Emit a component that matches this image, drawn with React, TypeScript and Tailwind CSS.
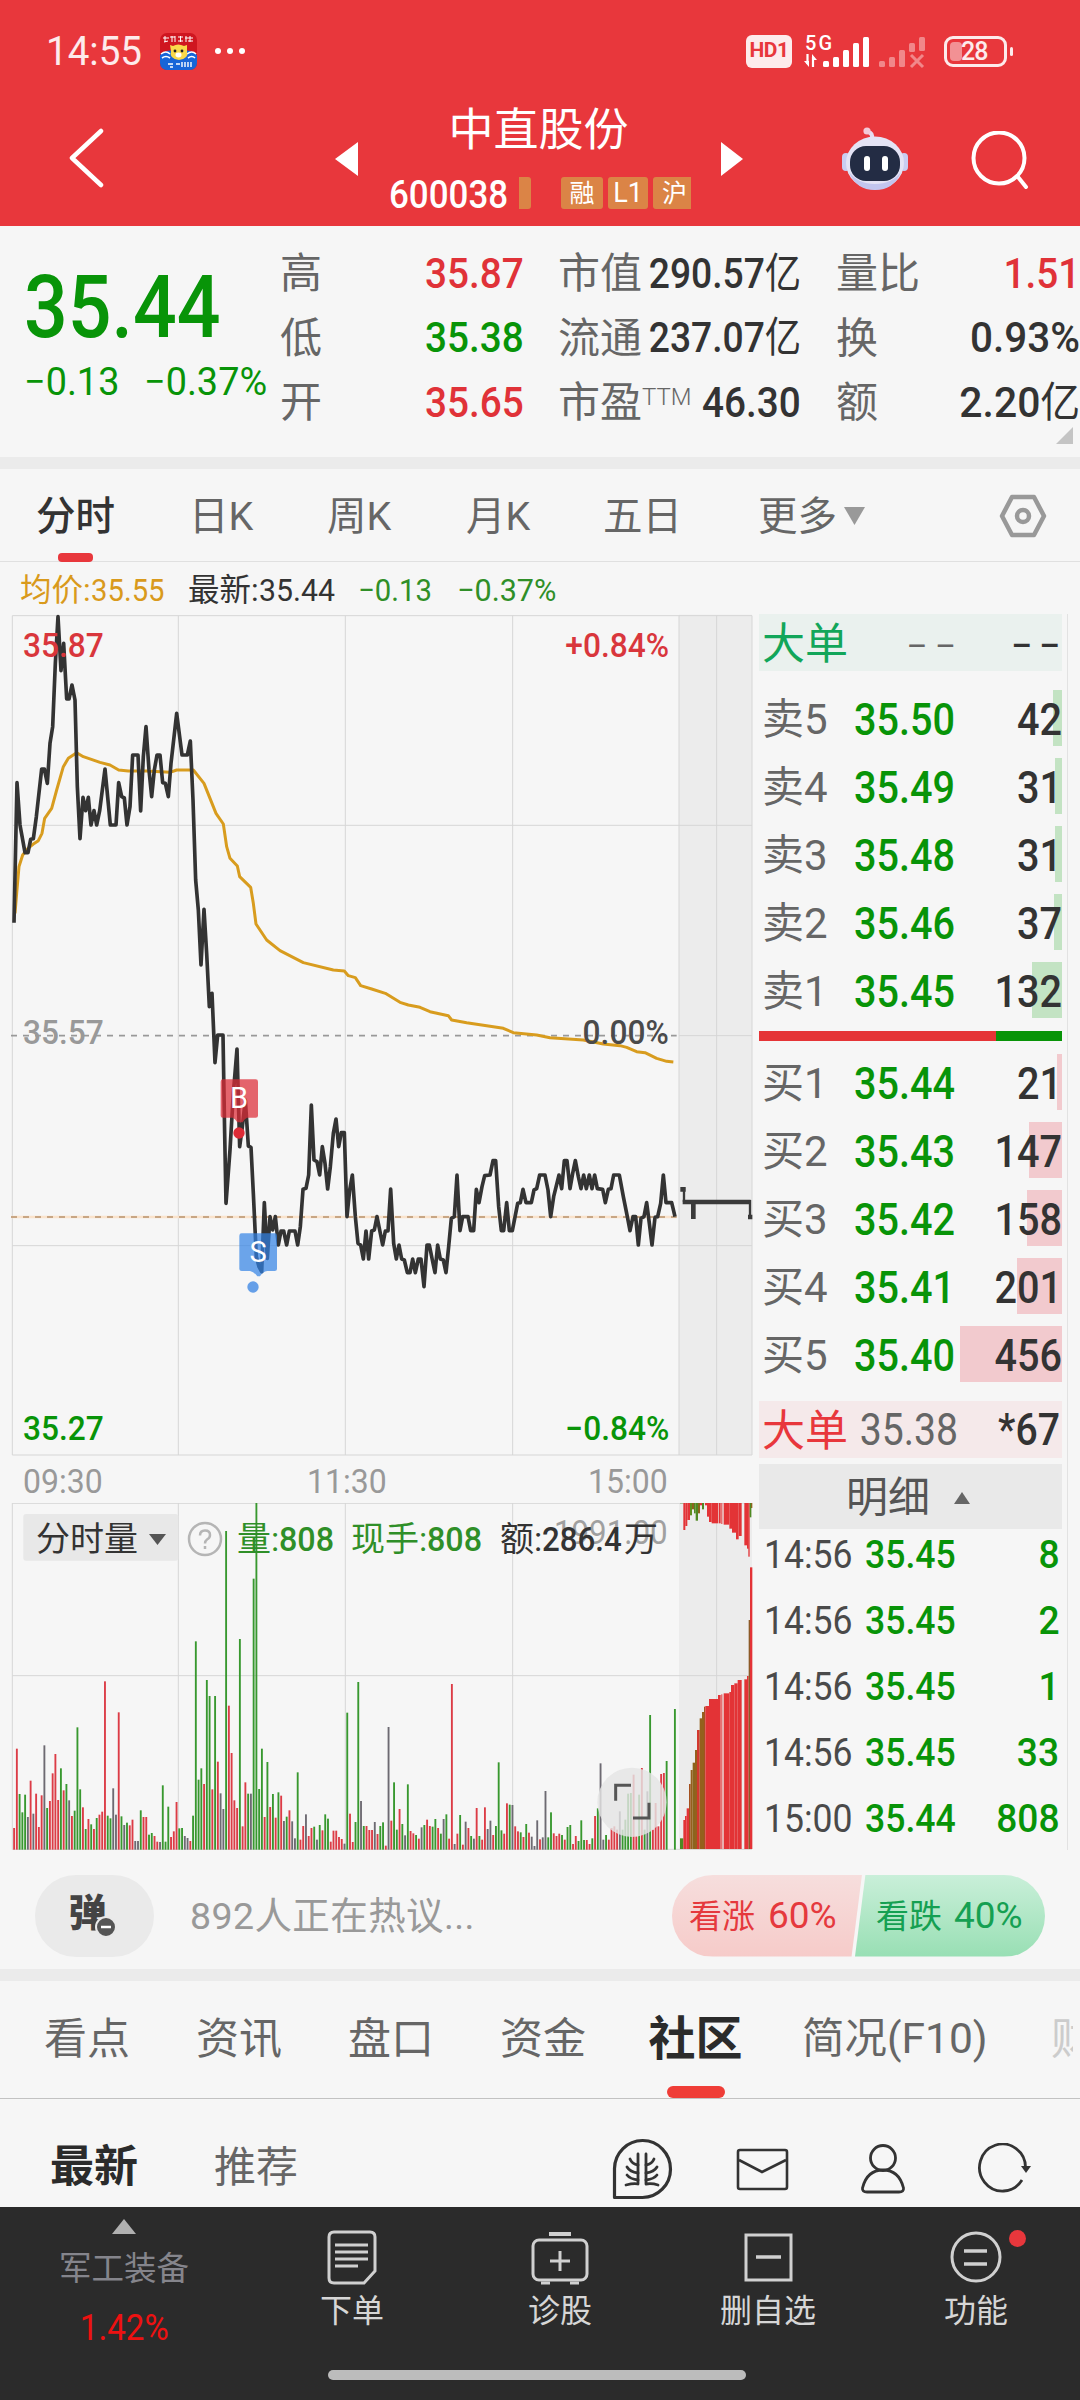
import type { ReactNode } from 'react';
import clsx from 'clsx';

// ---------- dados do gráfico (unidades de 1/3 px) ----------

const PRICE_LINE =
  '42,968 51,548 60,675 75,758 84,758 92,718 100,716 109,650 125,507 133,507 142,550 150,430 158,380 166,190 174,50 183,212 191,130 200,297 207,297 216,255 225,300 232,560 240,716 249,592 257,632 265,592 273,675 282,632 290,675 299,632 315,507 331,675 348,675 356,548 365,590 373,594 381,675 390,620 398,465 414,465 422,633 430,470 438,380 447,510 455,590 463,510 471,465 480,465 488,548 496,550 505,590 513,490 521,420 530,340 546,465 562,465 571,423 579,600 587,840 595,930 603,1095 612,928 620,1060 628,1220 636,1180 645,1388 653,1305 669,1305 674,1600 678,1810 690,1650 700,1480 711,1347 719,1640 727,1580 736,1500 745,1638 753,1642 760,1780 769,1970 777,2000 785,2015 793,1808 802,1975 810,1850 818,1890 826,1850 835,1935 843,1893 851,1893 860,1935 868,1893 885,1893 893,1935 901,1880 909,1768 918,1765 926,1725 934,1515 942,1680 951,1685 959,1725 967,1640 975,1690 983,1767 991,1700 1000,1600 1008,1557 1016,1640 1024,1598 1033,1598 1041,1850 1049,1770 1057,1725 1066,1850 1074,1930 1082,1935 1090,1977 1098,1893 1106,1977 1115,1893 1123,1890 1131,1850 1148,1935 1156,1893 1164,1893 1172,1767 1181,1930 1189,1977 1197,1935 1205,1977 1213,1980 1222,2018 1230,2018 1238,1977 1246,2018 1255,1977 1263,1977 1272,2060 1281,1935 1288,1935 1297,1980 1305,2018 1313,1935 1321,1977 1330,1980 1338,2018 1346,1940 1354,1855 1363,1850 1371,1725 1380,1892 1388,1850 1404,1850 1412,1892 1421,1892 1429,1768 1437,1808 1446,1760 1454,1727 1470,1725 1479,1682 1487,1682 1496,1820 1504,1892 1511,1892 1520,1808 1528,1892 1537,1892 1553,1810 1561,1808 1569,1768 1578,1808 1594,1808 1602,1770 1610,1766 1619,1725 1635,1725 1644,1770 1652,1850 1661,1790 1677,1725 1685,1766 1693,1682 1701,1682 1710,1766 1718,1720 1726,1682 1735,1730 1743,1766 1751,1725 1759,1766 1768,1725 1776,1766 1784,1725 1792,1766 1808,1768 1816,1808 1825,1768 1833,1766 1841,1725 1858,1725 1870,1790 1882,1850 1890,1892 1899,1850 1907,1850 1915,1935 1923,1855 1932,1850 1940,1808 1948,1870 1956,1935 1965,1852 1973,1850 1982,1810 1990,1725 1998,1808 2015,1808 2025,1850';

const AVG_LINE =
  '45,940 50,880 57,800 68,765 84,745 100,732 115,722 126,700 134,655 155,625 170,570 190,500 205,475 230,458 250,470 300,487 330,495 356,510 385,513 440,513 510,517 530,510 580,510 612,550 648,640 670,672 680,740 690,775 712,798 719,830 752,862 760,910 768,972 800,1020 840,1052 910,1088 1000,1110 1033,1113 1045,1127 1066,1133 1082,1157 1115,1167 1156,1180 1200,1207 1225,1215 1260,1222 1290,1235 1345,1247 1355,1260 1400,1268 1510,1285 1540,1298 1610,1305 1650,1313 1750,1320 1810,1332 1860,1337 1880,1342 1910,1355 1935,1358 1970,1375 2000,1384 2020,1386';

// r = alta, g = baixa, k = estável; o número é a altura da barra
const VOLUME =
  'r65 r303 g167 g112 g165 k98 r207 k108 r168 r68 r163 k313 g125 r146 r229 r287 r149 g244 r178 g197 k148 r101 g117 g367 g181 r127 g62 r92 g76 r62 g95 r105 r114 r505 g102 g94 k184 k105 r412 g100 k74 g81 r73 r90 k26 k26 g118 r98 r98 g45 g50 r41 r24 k23 g193 g24 g129 r38 r55 r143 g64 g65 k41 k35 r26 g102 g625 g210 g244 r197 g509 g461 r181 g461 r264 k169 k122 g956 r432 r290 r148 r125 g632 r70 r202 g168 k168 g813 g1041 g182 g303 r98 g263 r128 g167 r96 g172 r162 k86 g99 r118 k85 k34 g232 r30 r71 k106 r41 r65 g69 k30 g74 r58 g106 g93 r24 r57 r57 r38 r32 k18 g411 r108 r23 g83 g503 k146 g71 r71 r59 r59 k83 r47 g71 g82 r12 k368 r87 g202 g60 r122 g77 k43 g196 r56 r49 g44 r33 k67 g74 r90 r71 g69 g92 r65 g48 k92 g106 r33 r497 k17 r48 g104 r15 k84 r65 g41 k33 r125 g41 r30 r127 k62 k87 r44 g71 g262 g58 r48 r139 g135 k134 r70 r55 g52 r38 g77 r51 k39 k11 k88 r31 k37 k176 g37 g112 r49 r41 r48 g44 r30 g68 g74 r17 r41 g26 g88 g29 r29 r17 g34 r101 g124 k259 k30 g44 r30 r65 r70 r60 k115 g60 g90 g168 g170 r225 r40 g165 r245 g60 k175 g404 r60 r140 r70 r227 r230 g266 k0 k0 g422';

const BAR_COLOR: Record<string, string> = { r: '#dc3c46', g: '#38982f', k: '#6d6a72' };

// leilão de fechamento: [x, largura, topo, cor]
const AUCTION: [number, number, number, string][] = [
  [2040, 10, 1075, '#4f8a22'], [2050, 5, 1020, '#e33336'], [2055, 5, 1008, '#e33336'], [2060, 7, 985, '#e33336'],
  [2067, 5, 912, '#a4501f'], [2072, 6, 870, '#94601d'], [2078, 7, 848, '#8c641d'], [2085, 6, 810, '#94601d'],
  [2091, 8, 750, '#d2382e'], [2099, 7, 715, '#94601d'], [2106, 6, 696, '#94601d'], [2112, 4, 680, '#a4501f'],
  [2116, 11, 678, '#e33336'], [2127, 27, 657, '#e33336'], [2154, 8, 645, '#e33336'], [2164, 3, 643, '#e33336'],
  [2171, 17, 640, '#e33336'], [2188, 5, 636, '#e33336'], [2193, 10, 615, '#e33336'], [2203, 10, 610, '#e33336'],
  [2213, 12, 600, '#e33336'], [2233, 8, 598, '#e33336'], [2241, 5, 588, '#e33336'], [2246, 4, 420, '#8c5a28'],
  [2250, 7, 262, '#e33336'],
];

const AUCTION_TOP: [number, number, number, string][] = [
  [2040, 10, 70, '#4f8a22'], [2050, 6, 150, '#e33336'], [2056, 6, 138, '#e33336'], [2062, 8, 120, '#e33336'],
  [2070, 6, 106, '#5f8f1e'], [2076, 6, 88, '#8c641d'], [2082, 5, 100, '#4f8a22'], [2087, 7, 122, '#4f8a22'],
  [2094, 6, 100, '#8c641d'], [2100, 6, 76, '#e33336'], [2106, 6, 88, '#4f8a22'], [2115, 6, 76, '#e33336'],
  [2121, 6, 110, '#e33336'], [2127, 8, 126, '#e33336'], [2135, 19, 130, '#e33336'], [2156, 6, 130, '#e33336'],
  [2164, 3, 132, '#e33336'], [2171, 17, 134, '#e33336'], [2188, 8, 146, '#e33336'], [2196, 12, 158, '#e33336'],
  [2208, 8, 178, '#e33336'], [2216, 9, 168, '#e33336'], [2233, 8, 196, '#e33336'], [2241, 5, 206, '#e33336'],
  [2245, 4, 230, '#e33336'], [2249, 5, 112, '#4f8a22'], [2253, 4, 84, '#8c641d'],
];

const SELLS = [
  { label: '卖5', price: '35.50', qty: 42 },
  { label: '卖4', price: '35.49', qty: 31 },
  { label: '卖3', price: '35.48', qty: 31 },
  { label: '卖2', price: '35.46', qty: 37 },
  { label: '卖1', price: '35.45', qty: 132 },
];

const BUYS = [
  { label: '买1', price: '35.44', qty: 21 },
  { label: '买2', price: '35.43', qty: 147 },
  { label: '买3', price: '35.42', qty: 158 },
  { label: '买4', price: '35.41', qty: 201 },
  { label: '买5', price: '35.40', qty: 456 },
];

const TRADES = [
  { time: '14:56', price: '35.45', qty: 8 },
  { time: '14:56', price: '35.45', qty: 2 },
  { time: '14:56', price: '35.45', qty: 1 },
  { time: '14:56', price: '35.45', qty: 33 },
  { time: '15:00', price: '35.44', qty: 808 },
];

// Números em estilo condensado
function Num({ children, className, scale = 'scale-x-90' }: { children: ReactNode; className?: string; scale?: string }) {
  return <span className={clsx('inline-block whitespace-nowrap', scale, className)}>{children}</span>;
}

function StatusBar() {
  return (
    <div className="flex h-[102px] items-center pl-[46px] pr-[67px] text-white/90">
      <Num className="mt-[2px] w-[114px] origin-left text-[41px]" scale="scale-x-[0.94]">14:55</Num>
      <svg width="37" height="37" viewBox="0 0 37 37">
        <rect width="37" height="37" rx="7" fill="#cf1620" />
        <path d="M0 22 Q9 14 18 20 Q28 14 37 22 V30 a7 7 0 0 1-7 7 H7 a7 7 0 0 1-7-7z" fill="#1765d8" />
        <path d="M1 21q5-4 9 0M27 21q5-4 9 0M2 25q4-3 8 0M28 25q4-3 7 0" stroke="#fff" strokeWidth="1.6" fill="none" />
        <path d="M10 12l3 1q5-3 11 0l3-1 0 6q2 8-8 9q-10-1-8-9z" fill="#f9d94a" />
        <circle cx="15" cy="18" r="1.4" fill="#222" />
        <circle cx="22" cy="18" r="1.4" fill="#222" />
        <ellipse cx="18.5" cy="22" rx="3" ry="2.4" fill="#fff" />
        <path d="M5 3v6M3 5h6M4 9l4-1M12 3v6M10 4h5M15 3v6M18 4h5M20.500 3v6M18 8h5M26 3v6M30 3v6M25 5h8M28 8h5" stroke="#fff" strokeWidth="1" fill="none" />
        <path d="M8 31h5M16 31h4M22 29v5M25 29v5M28 29v5M31 29v5M10 34h3" stroke="#fff" strokeWidth="1.4" />
      </svg>
      <div className="ml-[18px] flex gap-[6px]">
        <i className="size-[6px] rounded-full bg-white" />
        <i className="size-[6px] rounded-full bg-white" />
        <i className="size-[6px] rounded-full bg-white" />
      </div>

      <div className="ml-auto flex items-center">
        <div className="flex h-[33px] w-[46px] items-center justify-center rounded-[6px] bg-white/90 text-[21px] font-bold tracking-[-0.5px] text-[#e8373c]">HD1</div>
        <svg className="ml-[12px]" width="126" height="37" viewBox="0 0 126 37" fill="#fff">
          <text x="1" y="17" fontFamily="Roboto" fontWeight="500" fontSize="20" textLength="27">5G</text>
          <path d="M3.500 21v10M9 24v10" stroke="#fff" strokeWidth="2.200" />
          <path d="M0 28h5v6zM13 27H8v-6z" />
          <rect x="19" y="28" width="6" height="6" rx="1.500" />
          <rect x="29" y="24" width="6" height="10" rx="1.500" />
          <rect x="39" y="17" width="6" height="17" rx="1.500" />
          <rect x="49" y="10" width="6" height="24" rx="1.500" />
          <rect x="59" y="4" width="6" height="30" rx="1.500" />
          <g opacity=".4">
            <rect x="75" y="28" width="6" height="6" rx="1.500" />
            <rect x="85" y="24" width="6" height="10" rx="1.500" />
            <rect x="95" y="17" width="6" height="17" rx="1.500" />
            <rect x="105" y="10" width="6" height="9" rx="1.500" />
            <rect x="115" y="4" width="6" height="14" rx="1.500" />
            <path d="M107 22l12 12M119 22l-12 12" stroke="#fff" strokeWidth="3" />
          </g>
        </svg>
        <div className="ml-[14px] flex h-[31px] w-[63px] items-center rounded-[9px] border-[3px] border-white/90 p-[3px]">
          <div className="h-full w-[12px] rounded-[4px] bg-white/45" />
          <span className="ml-[-1px] text-[25px] leading-none font-medium tracking-[-1px]">28</span>
        </div>
        <i className="ml-[3px] h-[9px] w-[3px] rounded-full bg-white/90" />
      </div>
    </div>
  );
}

function Robot() {
  return (
    <svg width="68" height="66" viewBox="0 0 68 66">
      <path d="M31 13q1-6-4-7" stroke="#e6dcf0" strokeWidth="4" fill="none" />
      <circle cx="26" cy="5" r="3.600" fill="#f3c9d8" />
      <rect x="1" y="27" width="8" height="18" rx="4" fill="#c9cdf2" />
      <rect x="59" y="27" width="8" height="18" rx="4" fill="#c9cdf2" />
      <ellipse cx="34" cy="37" rx="29" ry="26.500" fill="#e4e3f5" />
      <path d="M8 46q7 18 26 18q19 0 26-18q-9 12-26 12q-17 0-26-12z" fill="#c2c5ef" />
      <rect x="9" y="20" width="50" height="35" rx="16" fill="#232c44" />
      <rect x="23" y="30" width="6" height="15" rx="3" fill="#fff" />
      <rect x="41" y="30" width="6" height="15" rx="3" fill="#fff" />
    </svg>
  );
}

function TitleBar() {
  return (
    <div className="flex h-[124px] items-start">
      <svg className="ml-[67px] mt-[26px]" width="38" height="60" fill="none" stroke="#fff" strokeWidth="4.500">
        <path d="M34 3L5 30L34 57" strokeLinecap="round" strokeLinejoin="round" />
      </svg>
      <svg className="ml-[230px] mt-[40px]" width="23" height="34"><path d="M23 0v34L0 17z" fill="#fff" /></svg>
      <div className="ml-[31px] w-[305px]">
        <div className="mt-[2px] pr-[6px] text-center text-[45px] leading-[54px] text-white">中直股份</div>
        <div className="mt-[19px] flex h-[32px] items-center text-white">
          <Num className="mt-[3px] w-[130px] origin-left text-[38px] leading-none font-medium" scale="scale-x-[0.92]">600038</Num>
          <i className="h-full w-[12px] rounded-r-[3px] bg-[#db8446]" />
          <div className="ml-[30px] flex h-full gap-[5px] text-[27px] leading-[33px]">
            <span className="w-[42px] shrink-0 rounded-[3px] bg-[#db8446] text-center text-[25px]">融</span>
            <span className="w-[40px] shrink-0 rounded-[3px] bg-[#db8446] text-center">L1</span>
            <span className="w-[38px] shrink-0 rounded-l-[3px] bg-[#db8446] pl-[9px] text-[25px]">沪</span>
          </div>
        </div>
      </div>
      <svg className="ml-[27px] mt-[40px]" width="23" height="34"><path d="M0 0v34L22 17z" fill="#fff" /></svg>
      <div className="ml-[97px] mt-[24px]"><Robot /></div>
      <svg className="ml-[62px] mt-[29px]" width="60" height="62" fill="none" stroke="#fff" strokeWidth="4">
        <circle cx="28" cy="27" r="25.500" />
        <path d="M47 46L55 56" strokeLinecap="round" />
      </svg>
    </div>
  );
}

function InfoRow({ label, value, tone, wide, scale }: { label: ReactNode; value: ReactNode; tone: string; wide: string; scale?: string }) {
  return (
    <div className={clsx('flex h-[64.5px] items-center justify-between', wide)}>
      <span className="mt-[2px] whitespace-nowrap text-[42px] text-[#666]">{label}</span>
      <Num className={clsx('-ml-[30px] origin-right text-[43px] font-medium', tone)} scale={scale}>{value}</Num>
    </div>
  );
}

function Quote() {
  const red = 'text-[#e03238]';
  const green = 'text-[#089408]';
  const dark = 'text-[#333]';
  const yi = <span className="text-[42px] font-normal">亿</span>;
  return (
    <div className="flex h-[231px] pt-[15px]">
      <div className="w-[280px] shrink-0 pl-[24px] text-[#089408]">
        <Num className="mt-[23px] h-[86px] origin-left text-[87px] leading-[86px] font-medium" scale="scale-x-[0.885]">35.44</Num>
        <div className="mt-[6px] flex text-[39px] leading-[52px]">
          <Num className="w-[120px] origin-left" scale="scale-x-[0.97]">−0.13</Num>
          <Num className="origin-left" scale="scale-x-[0.97]">−0.37%</Num>
        </div>
      </div>
      <div className="leading-none">
        <InfoRow wide="w-[244px]" label="高" value="35.87" tone={red} />
        <InfoRow wide="w-[244px]" label="低" value="35.38" tone={green} />
        <InfoRow wide="w-[244px]" label="开" value="35.65" tone={red} />
      </div>
      <div className="ml-[34px] leading-none">
        <InfoRow wide="w-[243px]" label="市值" value={<>290.57{yi}</>} tone={dark} scale="scale-x-[0.865]" />
        <InfoRow wide="w-[243px]" label="流通" value={<>237.07{yi}</>} tone={dark} scale="scale-x-[0.865]" />
        <InfoRow wide="w-[243px]" label={<>市盈<sup className="text-[24px] font-light">TTM</sup></>} value="46.30" tone={dark} />
      </div>
      <div className="ml-[35px] leading-none">
        <InfoRow wide="w-[244px]" label="量比" value="1.51" tone={red} />
        <InfoRow wide="w-[244px]" label="换" value="0.93%" tone={dark} scale="scale-x-[0.94]" />
        <InfoRow wide="w-[244px]" label="额" value={<>2.20{yi}</>} tone={dark} scale="scale-x-[0.95]" />
        <svg className="mt-[-8px] ml-[220px]" width="17" height="17"><path d="M17 0v17H0z" fill="#c4c4c4" /></svg>
      </div>
    </div>
  );
}

function PeriodTabs() {
  return (
    <div className="flex h-[93px] border-b border-[#e0e0e0] text-[39.5px] leading-[95px] text-[#666]">
      <div className="ml-[36px] flex w-[79px] flex-col items-center font-medium text-[#333]">
        分时
        <i className="-mt-[11px] h-[9px] w-[35px] shrink-0 rounded-[4px] bg-[#e8373c]" />
      </div>
      <span className="ml-[74px] w-[138px]">日K</span>
      <span className="w-[139px]">周K</span>
      <span className="w-[137px]">月K</span>
      <span className="w-[155px]">五日</span>
      <span>更多</span>
      <svg className="ml-[7px] mt-[38px]" width="21" height="18"><path d="M0 0h21L10.500 18z" fill="#999" /></svg>
      <svg className="ml-[134px] mt-[24px]" width="48" height="46" fill="none" stroke="#999" strokeWidth="4.500" strokeLinejoin="round">
        <path d="M13 4h22l10 19-10 19H13L3 23z" />
        <circle cx="24" cy="23" r="6" />
      </svg>
    </div>
  );
}

function Legend() {
  const scale = 'scale-x-[0.93]';
  return (
    <div className="flex h-[52px] items-center pt-[6px] pl-[20px] text-[31.5px] leading-none">
      <span className="flex w-[168px] items-center text-[#d99a1c]">均价:<Num className="origin-left" scale={scale}>35.55</Num></span>
      <span className="flex w-[170px] items-center text-[#333]">最新:<Num className="origin-left" scale="scale-x-[0.96]">35.44</Num></span>
      <Num className="w-[99px] origin-left text-[#2f8f28]" scale={scale}>−0.13</Num>
      <Num className="origin-left text-[#2f8f28]" scale="scale-x-[0.97]">−0.37%</Num>
    </div>
  );
}

function PriceChart() {
  const label = 'absolute inline-block scale-x-[0.96] text-[33px] leading-none font-medium';
  return (
    <div className="relative h-[842px]">
      <svg width="759" height="842" viewBox="0 42 2277 2526" fill="none">
        <rect x="2037" y="44" width="219" height="2521" fill="#ececec" />
        <g stroke="#d6d6d6" strokeWidth="3">
          <path d="M37 47H2256M37 676H2256M37 1937H2256M37 2565H2256M2037 1307H2256" />
          <path d="M37 47V2565M535 47V2565M1036 47V2565M1538 47V2565M2037 47V2565M2150 47V2565M2256 47V2565" />
        </g>
        <path d="M33 1851H2030" stroke="#fae3cc" strokeWidth="7" />
        <path d="M33 1851H2030" stroke="#b8936c" strokeWidth="5" strokeDasharray="18 18" />
        <path d="M33 1307H2030" stroke="#999" strokeWidth="5" strokeDasharray="18 18" />
        <polyline points={AVG_LINE} stroke="#d89c1e" strokeWidth="9" strokeLinejoin="round" />
        <polyline points={PRICE_LINE} stroke="#333" strokeWidth="11" strokeLinejoin="round" />
        <g stroke="#3a3a3a">
          <path d="M2048 1806H2252" strokeWidth="14" />
          <path d="M2041 1768H2057M2080 1800V1857M2244 1851H2257" strokeWidth="14" />
          <path d="M2052 1762V1806M2250 1800V1851" strokeWidth="7" />
        </g>
        <path d="M669 1438h98q7 0 7 7v102q0 6-7 6h-26q-8 4-13 14h-16q-6-10-14-14h-29q-7 0-7-6v-102q0-7 7-7z" fill="#dd2b36" fillOpacity=".72" />
        <circle cx="717" cy="1599" r="17" fill="#dd2b36" />
        <path d="M725 1900h99q7 0 7 7v100q0 6-7 6h-22q-14 2-22 16h-8q-10-14-22-16h-25q-7 0-7-6v-100q0-7 7-7z" fill="#3082e6" fillOpacity=".7" />
        <circle cx="759" cy="2061" r="17" fill="#659fe8" />
      </svg>
      <span className="absolute top-[468px] left-[220px] w-[38px] text-center text-[29px] leading-[32px] text-white">B</span>
      <span className="absolute top-[622px] left-[239px] w-[38px] text-center text-[29px] leading-[32px] text-white">S</span>
      <span className={clsx(label, 'top-[15px] left-[23px] origin-left text-[#d9363c]')}>35.87</span>
      <span className={clsx(label, 'top-[402px] left-[23px] origin-left text-[#999]')}>35.57</span>
      <span className={clsx(label, 'top-[798px] left-[23px] origin-left text-[#089408]')}>35.27</span>
      <span className={clsx(label, 'top-[15px] right-[90px] origin-right text-[#d9363c]')}>+0.84%</span>
      <span className={clsx(label, 'top-[402px] right-[90px] origin-right text-[#4a4a4a]')}>0.00%</span>
      <span className={clsx(label, 'top-[798px] right-[90px] origin-right text-[#089408]')}>−0.84%</span>
    </div>
  );
}

function VolumeChart() {
  const scale = 'scale-x-[0.95]';
  return (
    <div className="relative h-[347px]">
      <svg width="759" height="347" viewBox="0 69 2277 1041">
        <rect x="2037" y="69" width="219" height="1041" fill="#ececec" />
        <g stroke="#d6d6d6" strokeWidth="3" fill="none">
          <path d="M37 70H2256M37 587H2256M37 1108H2256" />
          <path d="M37 69V1109M535 69V1109M1036 69V1109M1538 69V1109M2150 69V1109" />
        </g>
        <rect x="70" y="102" width="465" height="140" rx="8" fill="#e8e8e8" />
        {VOLUME.split(' ').map((bar, i) => {
          const h = Number(bar.slice(1));
          return <rect key={i} x={39.500 + i * 8.26} y={1109 - h} width="5.600" height={h} fill={BAR_COLOR[bar[0]]} />;
        })}
        {AUCTION.map(([x, w, top, fill]) => (
          <rect key={x} x={x} y={top} width={w} height={1107 - top} fill={fill} />
        ))}
        {AUCTION_TOP.map(([x, w, bottom, fill]) => (
          <rect key={x} x={x} y="66" width={w} height={bottom - 66} fill={fill} />
        ))}
        <circle cx="1896" cy="967" r="104" fill="#e4e4e4" fillOpacity=".82" />
        <path d="M1847 962v-46h46M1899 1014h48v-46" fill="none" stroke="#555" strokeWidth="9" />
      </svg>
      <Num className="absolute top-[10px] right-[91px] origin-right text-[34px] leading-[38px] text-[#a0a0a0]" scale="scale-x-[0.92]">1991.00</Num>
      <div className="absolute top-[14px] left-[36px] flex h-[44px] items-center text-[34px] leading-none whitespace-nowrap">
        <span className="w-[102px] text-[#333]">分时量</span>
        <svg className="ml-[11px]" width="17" height="11"><path d="M0 0h17L8.500 11z" fill="#555" /></svg>
        <svg className="ml-[21px]" width="36" height="36" fill="none" stroke="#b5b5b5" strokeWidth="2.500">
          <circle cx="18" cy="18" r="16" />
          <path d="M13 14.500q0-5 5-5t5 4.500q0 3-3 4.500q-2 1.500-2 4M18 25v3" />
        </svg>
        <span className="ml-[14px] flex w-[114px] items-center text-[#2f8f28]">量:<Num className="origin-left font-medium" scale={scale}>808</Num></span>
        <span className="flex w-[149px] items-center text-[#2f8f28]">现手:<Num className="origin-left font-medium" scale={scale}>808</Num></span>
        <span className="flex items-center text-[#333]">额:<Num className="origin-left font-medium" scale="scale-x-[0.92]">286.4</Num><span className="ml-[-5px]">万</span></span>
      </div>
    </div>
  );
}

function BigOrder({ bg, color, price, qty, size }: { bg: string; color: string; price: string; qty: string; size: string }) {
  return (
    <div className={clsx('flex h-[57px] items-center pt-[3px] pl-[3px] leading-none', bg)}>
      <span className={clsx('w-[87px] whitespace-nowrap text-[43px]', color)}>大单</span>
      <Num className={clsx('w-[107px] origin-right text-right text-[#666]', size)}>{price}</Num>
      <Num className={clsx('ml-auto origin-right pr-[2px] font-medium text-[#333]', size)}>{qty}</Num>
    </div>
  );
}

function OrderRow({ label, price, qty, bar }: { label: string; price: string; qty: number; bar: string }) {
  return (
    <div className="relative flex h-[68px] items-center pt-[4px] pl-[3px] leading-none">
      <i className={clsx('absolute top-[6px] right-0 h-[56px]', bar)} style={{ width: Math.max(4, qty * 0.2237) }} />
      <span className="relative w-[92px] text-[42px] whitespace-nowrap text-[#666]">{label}</span>
      <Num className="relative origin-left text-[44px] font-medium text-[#089408]">{price}</Num>
      <Num className="relative ml-auto origin-right text-[44px] font-medium text-[#333]">{qty}</Num>
    </div>
  );
}

function OrderBook() {
  return (
    <div className="w-[303px]">
      <BigOrder bg="bg-[#eaf1ee]" color="text-[#12a65a]" price="– –" qty="– –" size="text-[35px] pt-[5px]" />
      <div className="mt-[13px]">
        {SELLS.map((row) => <OrderRow key={row.label} {...row} bar="bg-[#c3e3c3]" />)}
      </div>
      <div className="mt-[7px] flex h-[10px]">
        <i className="w-[237px] bg-[#e53436]" />
        <i className="flex-1 bg-[#089408]" />
      </div>
      <div className="mt-[7px]">
        {BUYS.map((row) => <OrderRow key={row.label} {...row} bar="bg-[#f2cace]" />)}
      </div>
      <div className="mt-[13px]">
        <BigOrder bg="bg-[#f5e9ea]" color="text-[#e8373c]" price="35.38" qty="*67" size="text-[43.5px]" />
      </div>
      <div className="mt-[6px] flex h-[65px] items-center bg-[#e9e9e9] pt-[2px] pl-[87px] text-[42px] leading-none text-[#555]">
        明细
        <svg className="ml-[24px]" width="16" height="12"><path d="M8 0l8 12H0z" fill="#666" /></svg>
      </div>
      <div className="mt-[-7px]">
        {TRADES.map((t, i) => (
          <div key={i} className="flex h-[66px] items-center pl-[5px] text-[39.5px] leading-none">
            <Num className="w-[101px] origin-left text-[#4a4a4a]">{t.time}</Num>
            <Num className="origin-left font-medium text-[#089408]">{t.price}</Num>
            <Num className="ml-auto origin-right pr-[3px] font-medium text-[#089408]" scale="scale-x-[0.94]">{t.qty}</Num>
          </div>
        ))}
      </div>
    </div>
  );
}

function CommentBar() {
  return (
    <div className="flex h-[119px] items-center px-[35px] pt-[12px] leading-none">
      <div className="relative flex h-[82px] w-[119px] items-center justify-center rounded-full bg-[#eaeaea] text-[38px] font-black text-[#444]">
        <span className="mb-[6px] mr-[14px]">弹</span>
        <svg className="absolute top-[41px] left-[60px]" width="22" height="22">
          <circle cx="11" cy="11" r="10" fill="#555" stroke="#e9e9e9" strokeWidth="2" />
          <path d="M6 11h10" stroke="#fff" strokeWidth="2.500" />
        </svg>
      </div>
      <span className="mt-[2px] ml-[36px] text-[37.5px] tracking-[0.4px] text-[#999]">892人正在热议...</span>
      <div className="ml-auto flex h-[82px] w-[373px] overflow-hidden rounded-full text-[33px] leading-[82px] whitespace-nowrap">
        <div className="w-[190px] bg-linear-to-b from-[#f6dedd] to-[#f6cbc9] pl-[17px] text-[#e5393d] [clip-path:polygon(0_0,100%_0,94.500%_100%,0_100%)]">
          看涨<span className="ml-[13px] text-[37px]">60%</span>
        </div>
        <div className="-ml-[7px] flex-1 bg-linear-to-b from-[#c9efd9] to-[#98dfb4] pl-[21px] text-[#15a052] [clip-path:polygon(5.500%_0,100%_0,100%_100%,0_100%)]">
          看跌<span className="ml-[12px] text-[37px]">40%</span>
        </div>
      </div>
    </div>
  );
}

function SectionTabs() {
  return (
    <div className="flex h-[118px] overflow-hidden border-b border-[#c2c2c2] pl-[44px] text-[43px] leading-[116px] whitespace-nowrap text-[#666]">
      <span className="w-[152px] shrink-0">看点</span>
      <span className="w-[152px] shrink-0">资讯</span>
      <span className="w-[152px] shrink-0">盘口</span>
      <span className="w-[147px] shrink-0">资金</span>
      <div className="flex w-[97px] shrink-0 flex-col items-center text-[47px] font-bold text-[#2b2b2b]">
        社区
        <i className="-mt-[11px] h-[12px] w-[58px] shrink-0 rounded-[6px] bg-[#ef3d37]" />
      </div>
      <span className="ml-[58px] w-[249px] shrink-0 text-[42.5px]">简况(F10)</span>
      <span className="w-[22px] shrink-0 overflow-hidden text-[#ccc]">财</span>
    </div>
  );
}

function FeedBar() {
  return (
    <div className="flex h-[108px] items-start pl-[50px] text-[#333]">
      <span className="text-[44px] leading-[137px] font-bold text-[#2b2b2b]">最新</span>
      <span className="ml-[76px] text-[42px] leading-[138px] text-[#666]">推荐</span>
      <svg className="mt-[39px] ml-auto" width="62" height="64" fill="none" stroke="#333" strokeWidth="3.200">
        <path d="M3.500 59.500V30.500A28 28.500 0 1 1 31.500 59.500z" strokeLinejoin="round" />
        <g strokeWidth="2.800" strokeLinecap="round">
          <path d="M27 16V46M35 16V46M15 47q8-2 12-1M35 46q6-1 12 1" />
          <path d="M27 27q-6-1-8-6M27 35q-8-1-11-6M27 42q-8-1-11-5M35 27q6-1 8-6M35 35q8-1 11-6M35 42q8-1 11-5" />
        </g>
      </svg>
      <svg className="mt-[47px] ml-[62px]" width="54" height="48" fill="none" stroke="#333" strokeWidth="2.600">
        <rect x="3" y="4" width="49" height="39" rx="2" />
        <path d="M4 14L27 26L51 14" />
      </svg>
      <svg className="mt-[44px] ml-[70px]" width="48" height="52" fill="none" stroke="#333" strokeWidth="2.800">
        <circle cx="24" cy="15" r="12.500" />
        <path d="M24 27Q40 27 44.500 45Q45 49 40 49H8Q3 49 3.500 45Q8 27 24 27z" />
      </svg>
      <svg className="mt-[44px] mr-[48px] ml-[69px]" width="56" height="52" fill="none" stroke="#333" strokeWidth="2.800">
        <path d="M46 37A23 23.500 0 1 1 49.500 25" />
        <path d="M45 23h10l-5 7z" fill="#333" stroke="none" />
      </svg>
    </div>
  );
}

function NavItem({ label, icon, badge }: { label: string; icon: ReactNode; badge?: boolean }) {
  return (
    <div className="relative flex w-[208px] flex-col items-center pt-[20px] text-[32px] leading-none text-[#d6d6d6]">
      <svg width="60" height="60" fill="none" stroke="#d0d0d0" strokeWidth="3">{icon}</svg>
      <span className="mt-[8px]">{label}</span>
      {badge && <i className="absolute top-[23px] right-[54px] size-[17px] rounded-full bg-[#e8373c]" />}
    </div>
  );
}

function BottomNav() {
  return (
    <div className="h-[193px] bg-[#2b2b2b]">
      <div className="flex h-[163px]">
        <div className="flex w-[248px] flex-col items-center leading-none">
          <svg className="mt-[12px]" width="26" height="15"><path d="M13 0l12 15H1z" fill="#b0b0b0" /></svg>
          <span className="mt-[19px] text-[32.5px] text-[#85858c]">军工装备</span>
          <Num className="mt-[24px] text-[36px] text-[#ee1111]" scale="scale-x-[0.92]">1.42%</Num>
        </div>
        <NavItem
          label="下单"
          icon={<><path d="M12 5h36q5 0 5 5v34l-11 12H12q-5 0-5-5V10q0-5 5-5z" /><path d="M13 18h33M13 25h33M13 32h33M13 39h23" /></>}
        />
        <NavItem
          label="诊股"
          icon={<><path d="M19 7h22" strokeWidth="4" /><rect x="3" y="13" width="54" height="40" rx="6" /><path d="M30 24v20M20 34h20M11 56h9M40 56h9" /></>}
        />
        <NavItem label="删自选" icon={<><path d="M8 8h45v45H8z" /><path d="M18 30h25" strokeWidth="3.500" /></>} />
        <NavItem label="功能" badge icon={<><circle cx="30" cy="30" r="24" /><path d="M18 24h23M18 37h23" strokeWidth="3.500" /></>} />
      </div>
      <div className="mx-auto h-[10px] w-[418px] translate-x-[-3px] rounded-full bg-[#bcbcbc]" />
    </div>
  );
}

export default function App() {
  return (
    <div className="h-[2400px] w-[1080px] overflow-hidden bg-[#f6f6f6] [font-family:Roboto,'Noto_Sans_CJK_SC',sans-serif]">
      <header className="bg-[#e8373c]">
        <StatusBar />
        <TitleBar />
      </header>
      <Quote />
      <div className="h-[12px] bg-[#ebebeb]" />
      <PeriodTabs />
      <Legend />
      <div className="flex h-[1236px]">
        <div className="w-[759px]">
          <PriceChart />
          <div className="flex h-[47px] items-center pt-[3px] pr-[91px] pl-[23px] text-[34px] leading-none text-[#999]">
            <Num className="w-[284px] origin-left" scale="scale-x-[0.94]">09:30</Num>
            <Num className="origin-left" scale="scale-x-[0.94]">11:30</Num>
            <Num className="ml-auto origin-right" scale="scale-x-[0.94]">15:00</Num>
          </div>
          <VolumeChart />
        </div>
        <OrderBook />
        <div className="ml-[5px] w-px bg-[#e2e2e2]" />
      </div>
      <CommentBar />
      <div className="h-[12px] bg-[#ebebeb]" />
      <SectionTabs />
      <FeedBar />
      <BottomNav />
    </div>
  );
}
